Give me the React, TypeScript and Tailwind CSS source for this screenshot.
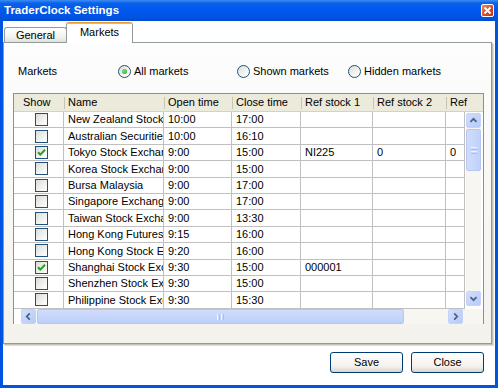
import React from 'react'

type Row = { name: string; open: string; close: string; checked?: boolean; ref1?: string; ref2?: string; ref3?: string }

// names are shown cut at the column edge, as in the grid
const rows: Row[] = [
  { name: 'New Zealand Stock', open: '10:00', close: '17:00' },
  { name: 'Australian Securitie', open: '10:00', close: '16:10' },
  { name: 'Tokyo Stock Exchan', open: '9:00', close: '15:00', checked: true, ref1: 'NI225', ref2: '0', ref3: '0' },
  { name: 'Korea Stock Exchan', open: '9:00', close: '15:00' },
  { name: 'Bursa Malaysia', open: '9:00', close: '17:00' },
  { name: 'Singapore Exchang', open: '9:00', close: '17:00' },
  { name: 'Taiwan Stock Excha', open: '9:00', close: '13:30' },
  { name: 'Hong Kong Futures', open: '9:15', close: '16:00' },
  { name: 'Hong Kong Stock E', open: '9:20', close: '16:00' },
  { name: 'Shanghai Stock Exc', open: '9:30', close: '15:00', checked: true, ref1: '000001' },
  { name: 'Shenzhen Stock Exc', open: '9:30', close: '15:00' },
  { name: 'Philippine Stock Exc', open: '9:30', close: '15:30' },
]

function CheckBox({ checked }: { checked?: boolean }) {
  return (
    <div className="h-[13px] w-[13px] border border-[#1c5180] bg-[linear-gradient(135deg,#dcdcd7,#f6f6f3_70%,#ffffff)]">
      {checked && (
        <svg width="11" height="11" viewBox="0 0 11 11">
          <path d="M2 5.2 L4.3 7.6 L9 2.8" fill="none" stroke="#21a121" strokeWidth="2" />
        </svg>
      )}
    </div>
  )
}

function Radio({ checked, label }: { checked?: boolean; label: string }) {
  return (
    <div className="flex items-center gap-[3px]">
      <div className="flex h-[13px] w-[13px] items-center justify-center rounded-full border border-[#1c5180] bg-[linear-gradient(135deg,#dcdcd7,#f8f8f5_70%,#ffffff)]">
        {checked && <div className="h-[5px] w-[5px] rounded-full bg-[radial-gradient(circle_at_40%_40%,#7fe07f,#21a121)]" />}
      </div>
      <span>{label}</span>
    </div>
  )
}

function Arrow({ dir }: { dir: 'up' | 'down' | 'left' | 'right' }) {
  const d = {
    up: 'M4 9 L7.5 5.5 L11 9',
    down: 'M4 6 L7.5 9.5 L11 6',
    left: 'M9 4 L5.5 7.5 L9 11',
    right: 'M6 4 L9.5 7.5 L6 11',
  }[dir]
  return (
    <div className="flex h-[15px] w-[15px] shrink-0 items-center justify-center rounded-[2px] border border-[#c3d3fd] bg-[linear-gradient(135deg,#d2defd,#b6cbf8)]">
      <svg width="15" height="15" viewBox="0 0 15 15">
        <path d={d} fill="none" stroke="#4d6185" strokeWidth="2" />
      </svg>
    </div>
  )
}

export default function App() {
  const cellText = 'overflow-hidden whitespace-nowrap pl-[4px] border-r border-[#c0c0c0] h-full flex items-center'
  return (
    <div className="flex h-[388px] w-[498px] flex-col bg-[#0054e3] font-['Liberation_Sans',Arial,sans-serif] text-[11px] text-black">
      {/* title bar */}
      <div className="flex h-[21px] shrink-0 items-center justify-between bg-[linear-gradient(to_bottom,#3d8df5_0%,#0a62ea_15%,#0058ee_45%,#0054e3_80%,#004cd0_100%)] pl-[4px] pr-[4px]">
        <span className="text-[11.5px] font-bold text-white">TraderClock Settings</span>
        <div className="flex h-[13px] w-[13px] items-center justify-center rounded-[2px] border border-white bg-[linear-gradient(135deg,#f08a6a,#d9441c_60%,#c23b18)]">
          <svg width="9" height="9" viewBox="0 0 9 9">
            <path d="M1.5 1.5 L7.5 7.5 M7.5 1.5 L1.5 7.5" stroke="white" strokeWidth="1.8" />
          </svg>
        </div>
      </div>

      {/* body */}
      <div className="mx-[3px] mb-[3px] flex flex-1 flex-col bg-white">
        {/* tabs */}
        <div className="flex h-[21px] items-end pl-[1px]">
          <div className="flex h-[15px] w-[63px] items-center justify-center rounded-t-[3px] border border-b-0 border-[#919b9c] bg-[linear-gradient(to_bottom,#ffffff,#f3f3ef_60%,#e2e1da)]">
            General
          </div>
          <div className="relative z-10 mb-[-1px] ml-[-1px] flex h-[21px] w-[67px] flex-col rounded-t-[3px] border-x border-[#919b9c] bg-white">
            <div className="h-[3px] rounded-t-[3px] bg-[linear-gradient(to_bottom,#e68b2c,#ffc73c)]" />
            <div className="flex flex-1 items-center justify-center pb-[3px]">Markets</div>
          </div>
        </div>

        {/* panel */}
        <div className="mr-[3px] flex h-[302px] flex-col border border-[#919b9c] bg-[linear-gradient(to_bottom,#fdfdfd,#f3f2ed)] shadow-[1px_1px_0_#c5c2b2,2px_2px_0_#e0ded3]">
          <div className="mt-[21px] flex h-[14px] items-center pl-[14px]">
            <span className="w-[100px]">Markets</span>
            <div className="w-[119px]">
              <Radio checked label="All markets" />
            </div>
            <div className="w-[111px]">
              <Radio label="Shown markets" />
            </div>
            <Radio label="Hidden markets" />
          </div>

          {/* grid */}
          <div className="ml-[9px] mt-[15px] flex h-[231px] w-[471px] flex-col border border-[#8f8f8f] bg-white">
            <div className="flex h-[18px] shrink-0 items-center border-b border-[#d6d2c2] bg-[#ebeadb]">
              <div className="w-[50px] pl-[9px]">Show</div>
              {[
                ['Name', 'w-[100px]'],
                ['Open time', 'w-[68px]'],
                ['Close time', 'w-[69px]'],
                ['Ref stock 1', 'w-[72px]'],
                ['Ref stock 2', 'w-[73px]'],
                ['Ref', 'flex-1'],
              ].map(([t, w]) => (
                <div key={t} className={`flex h-full items-center ${w}`}>
                  <div className="h-[12px] w-[1px] bg-[#c7c5b2]" />
                  <span className="pl-[3px]">{t}</span>
                </div>
              ))}
            </div>

            <div className="flex h-[197px] shrink-0">
              <div className="flex w-[451px] flex-col overflow-hidden">
                {rows.map((r) => (
                  <div key={r.name} className="flex h-[16.4px] shrink-0 border-b border-[#c0c0c0]">
                    <div className="flex h-full w-[50px] items-center border-r border-[#c0c0c0] pl-[21px]">
                      <CheckBox checked={r.checked} />
                    </div>
                    <div className={`w-[100px] ${cellText}`}>{r.name}</div>
                    <div className={`w-[68px] ${cellText}`}>{r.open}</div>
                    <div className={`w-[69px] ${cellText}`}>{r.close}</div>
                    <div className={`w-[72px] ${cellText}`}>{r.ref1}</div>
                    <div className={`w-[73px] ${cellText}`}>{r.ref2}</div>
                    <div className={`flex-1 ${cellText}`}>{r.ref3}</div>
                  </div>
                ))}
              </div>
              <div className="flex w-[18px] flex-col pb-[3px] pl-[1px] pr-[2px] pt-[1px]">
                <Arrow dir="up" />
                <div className="flex flex-1 flex-col bg-[#f7f6f1] py-[1px]">
                  <div className="flex h-[42px] items-center justify-center rounded-[2px] border border-[#b4c6f4] bg-[linear-gradient(to_right,#d0dcfd,#c0d2fa)]">
                    <div className="flex flex-col gap-[1px]">
                      <div className="h-[1px] w-[6px] bg-[#eef4fe]" />
                      <div className="h-[1px] w-[6px] bg-[#a9c0f4]" />
                      <div className="h-[1px] w-[6px] bg-[#eef4fe]" />
                      <div className="h-[1px] w-[6px] bg-[#a9c0f4]" />
                    </div>
                  </div>
                </div>
                <Arrow dir="down" />
              </div>
            </div>

            <div className="flex flex-1 bg-[#f7f6f1]">
              <div className="w-[7px] bg-white" />
              <div className="flex w-[442px] items-stretch">
                <Arrow dir="left" />
                <div className="flex flex-1 bg-[#f7f6f1] px-[1px]">
                  <div className="flex w-[367px] items-center justify-center rounded-[2px] border border-[#b4c6f4] bg-[linear-gradient(to_bottom,#d0dcfd,#bcd0fa)]">
                    <div className="flex h-[6px] gap-[1px]">
                      <div className="h-full w-[1px] bg-[#eef4fe]" />
                      <div className="h-full w-[1px] bg-[#a9c0f4]" />
                      <div className="h-full w-[1px] bg-[#eef4fe]" />
                      <div className="h-full w-[1px] bg-[#a9c0f4]" />
                    </div>
                  </div>
                </div>
                <Arrow dir="right" />
              </div>
              <div className="flex-1" />
            </div>
          </div>
        </div>

        {/* buttons */}
        <div className="mt-[8px] flex justify-end gap-[8px] pr-[11px]">
          {['Save', 'Close'].map((t) => (
            <button
              key={t}
              className="flex h-[21px] w-[73px] items-center justify-center rounded-[3px] border border-[#003c74] bg-[linear-gradient(to_bottom,#ffffff,#f3f2ee_70%,#d9d5cb)]"
            >
              {t}
            </button>
          ))}
        </div>
      </div>
    </div>
  )
}
